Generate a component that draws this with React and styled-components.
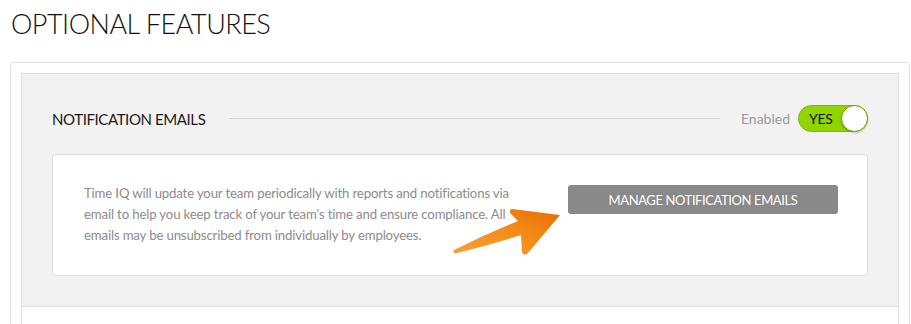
import React from 'react';
import styled, { createGlobalStyle } from 'styled-components';

const GlobalStyle = createGlobalStyle`
  html, body {
    margin: 0;
    padding: 0;
    background: #fff;
    font-family: Lato, "Open Sans", Arial, sans-serif;
  }
`;

const Page = styled.div`
  padding: 6px 1px 0 10px;
  width: 900px;
`;

const Title = styled.h1`
  margin: 0 0 20px 1px;
  font-size: 27px;
  font-weight: 300;
  color: #111;
  line-height: 36px;
  letter-spacing: -0.5px;
`;

const Card = styled.div`
  border: 1px solid #e2e2e2;
  border-radius: 4px;
  padding: 10px 10px 0 10px;
`;

const Panel = styled.section`
  background: ${p => (p.$muted ? '#f2f2f2' : '#fff')};
  border: 1px solid #e0e0e0;
  border-top: ${p => (p.$muted ? '1px solid #e0e0e0' : 'none')};
  border-bottom: ${p => (p.$muted ? '1px solid #dcdcdc' : 'none')};
  padding: ${p => (p.$muted ? '31px 30px 30px 30px' : '0')};
  min-height: ${p => (p.$muted ? '0' : '20px')};
`;

const Header = styled.div`
  display: flex;
  align-items: center;
  height: 27px;
  margin-bottom: 22px;
`;

const SectionName = styled.h2`
  margin: 0;
  font-size: 15px;
  font-weight: 400;
  color: #1a1a1a;
  letter-spacing: -0.4px;
`;

const Rule = styled.div`
  flex: 1;
  height: 1px;
  background: #d4d4d4;
  margin: 0 21px 0 24px;
`;

const StateLabel = styled.span`
  font-size: 14px;
  color: #9a9a9a;
  margin-right: 8px;
`;

const Toggle = styled.div`
  position: relative;
  width: 70px;
  height: 27px;
  border-radius: 14px;
  background: #90d400;
  box-sizing: border-box;
  border: 1px solid #7fb800;
  display: flex;
  align-items: center;
  padding-left: 10px;
`;

const ToggleText = styled.span`
  font-size: 14px;
  color: #111;
  letter-spacing: -0.3px;
`;

const Knob = styled.span`
  position: absolute;
  right: -1px;
  top: -1px;
  width: 27px;
  height: 27px;
  border-radius: 50%;
  background: #fff;
  box-sizing: border-box;
  border: 1.5px solid #6f9e00;
  box-shadow: 0 1px 2px rgba(0, 0, 0, 0.2);
`;

const InfoBox = styled.div`
  position: relative;
  background: #fff;
  border: 1px solid #dedede;
  border-radius: 4px;
  display: flex;
  justify-content: space-between;
  align-items: flex-start;
  padding: 28px 29px 29px 31px;
`;

const InfoText = styled.p`
  margin: 0;
  width: 450px;
  font-size: 13.2px;
  line-height: 21px;
  color: #8c8c8c;
  letter-spacing: -0.15px;
`;

const ActionButton = styled.button`
  margin-top: 2px;
  width: 270px;
  height: 29px;
  border: none;
  border-radius: 3px;
  background: #898989;
  color: #fff;
  font-family: Lato, "Open Sans", Arial, sans-serif;
  font-size: 13px;
  letter-spacing: -0.4px;
  cursor: pointer;
`;

const Arrow = styled.svg`
  position: absolute;
  left: 397px;
  top: 49px;
  width: 115px;
  height: 55px;
`;

const PointerArrow = () => (
  <Arrow viewBox="0 0 115 55">
    <defs>
      <linearGradient id="arrowFill" x1="0" y1="1" x2="1" y2="0">
        <stop offset="0" stopColor="#f7a13a" />
        <stop offset="0.6" stopColor="#f28a12" />
        <stop offset="1" stopColor="#e86a05" />
      </linearGradient>
    </defs>
    <path
      d="M110,11 L62,5 Q58,6 61,10 L68,17 Q36,30 4,46 Q2,50 7,49 Q40,41 71,31 L72,48 Q74,53 78,49 Z"
      fill="url(#arrowFill)"
    />
  </Arrow>
);

export default function App() {
  return (
    <>
      <GlobalStyle />
      <Page>
        <Title>OPTIONAL FEATURES</Title>
        <Card>
          <Panel $muted>
            <Header>
              <SectionName>NOTIFICATION EMAILS</SectionName>
              <Rule />
              <StateLabel>Enabled</StateLabel>
              <Toggle>
                <ToggleText>YES</ToggleText>
                <Knob />
              </Toggle>
            </Header>
            <InfoBox>
              <InfoText>
                Time IQ will update your team periodically with reports and notifications via
                email to help you keep track of your team's time and ensure compliance. All
                emails may be unsubscribed from individually by employees.
              </InfoText>
              <ActionButton>MANAGE NOTIFICATION EMAILS</ActionButton>
              <PointerArrow />
            </InfoBox>
          </Panel>
          <Panel />
        </Card>
      </Page>
    </>
  );
}
